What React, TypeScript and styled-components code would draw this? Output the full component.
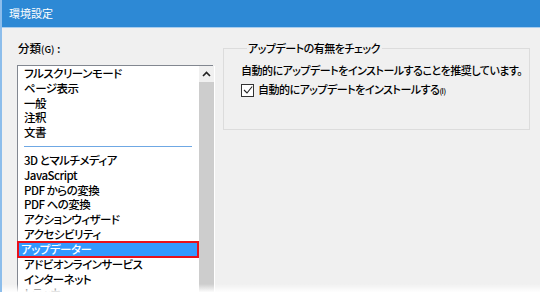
import { createGlobalStyle } from 'styled-components';
import styled from 'styled-components';

const GlobalStyle = createGlobalStyle`
    html, body {
        margin: 0;
        padding: 0;
        width: 540px;
        height: 292px;
        overflow: hidden;
        background: #ffffff;
    }
    body {
        font-family: "Noto Sans CJK JP", "Noto Sans", sans-serif;
        font-feature-settings: "palt";
        color: #000000;
    }
`;

interface Item {
    label: string;
    selected?: boolean;
}

const topItems: Item[] = [
    { label: 'フルスクリーンモード' },
    { label: 'ページ表示' },
    { label: '一般' },
    { label: '注釈' },
    { label: '文書' },
];

const bottomItems: Item[] = [
    { label: '3D とマルチメディア' },
    { label: 'JavaScript' },
    { label: 'PDF からの変換' },
    { label: 'PDF への変換' },
    { label: 'アクションウィザード' },
    { label: 'アクセシビリティ' },
    { label: 'アップデーター', selected: true },
    { label: 'アドビオンラインサービス' },
    { label: 'インターネット' },
    { label: 'トラッカー' },
];

const App = () => {
    return (
        <>
            <GlobalStyle />
            <Window>
                <TitleBar>環境設定</TitleBar>
                <Body>
                    <LeftPane>
                        <Label>
                            分類<Accel>(G)</Accel> :
                        </Label>
                        <ListBox>
                            <Items>
                                {topItems.map((item) => (
                                    <Row key={item.label}>{item.label}</Row>
                                ))}
                                <Separator />
                                {bottomItems.map((item) => (
                                    <Row key={item.label} $selected={item.selected}>
                                        {item.label}
                                    </Row>
                                ))}
                            </Items>
                            <ScrollBar>
                                <ScrollButton>
                                    <svg width="9" height="6" viewBox="0 0 9 6">
                                        <path d="M1 5 L4.5 1.5 L8 5" fill="none" stroke="#222" strokeWidth="1.6" />
                                    </svg>
                                </ScrollButton>
                                <ScrollTrack />
                            </ScrollBar>
                        </ListBox>
                    </LeftPane>
                    <RightPane>
                        <GroupBox>
                            <Legend>アップデートの有無をチェック</Legend>
                            <Note>自動的にアップデートをインストールすることを推奨しています。</Note>
                            <CheckRow>
                                <CheckBox>
                                    <svg width="10" height="10" viewBox="0 0 10 10">
                                        <path d="M1 5 L4 8 L9.2 1.5" fill="none" stroke="#222" strokeWidth="1.1" />
                                    </svg>
                                </CheckBox>
                                <span>
                                    自動的にアップデートをインストールする<Small>(I)</Small>
                                </span>
                            </CheckRow>
                        </GroupBox>
                    </RightPane>
                </Body>
                <Fade />
            </Window>
        </>
    );
};

const Window = styled.div`
    position: relative;
    width: 540px;
    height: 292px;
    box-sizing: border-box;
    border-left: 2px solid #8cbdeb;
    background: #f0f0f0;
    display: flex;
    flex-direction: column;
    overflow: hidden;
    font-size: 11px;
    letter-spacing: -0.5px;
    font-weight: 500;
`;

const TitleBar = styled.div`
    height: 27px;
    flex: none;
    background: #2d89d5;
    color: #ffffff;
    font-size: 11px;
    font-weight: 400;
    letter-spacing: 0;
    line-height: 27px;
    padding-left: 7px;
    border-bottom: 1px solid #a9cdee;
`;

const Body = styled.div`
    flex: 1;
    display: flex;
    align-items: flex-start;
    padding-left: 15px;
    min-height: 0;
`;

const LeftPane = styled.div`
    width: 196px;
    flex: none;
    display: flex;
    flex-direction: column;
    padding-top: 12px;
    height: 100%;
    box-sizing: border-box;
`;

const Label = styled.div`
    font-size: 11.5px;
    letter-spacing: 0;
    line-height: 16px;
    margin-left: 1px;
    margin-bottom: 8px;
`;

const Accel = styled.span`
    font-size: 9.5px;
`;

const ListBox = styled.div`
    flex: 1;
    display: flex;
    border: 1px solid #828790;
    border-bottom: none;
    background: #ffffff;
    margin-bottom: -20px;
`;

const Items = styled.div`
    flex: 1;
    padding: 0 2px 0 2px;
    display: flex;
    flex-direction: column;
`;

const Row = styled.div<{ $selected?: boolean }>`
    font-size: 11.5px;
    line-height: 14.8px;
    height: 14.8px;
    padding-left: ${(p) => (p.$selected ? '2px' : '4px')};
    white-space: nowrap;
    color: ${(p) => (p.$selected ? '#ffffff' : '#000000')};
    background: ${(p) => (p.$selected ? '#3399ff' : 'transparent')};
    outline: ${(p) => (p.$selected ? '2px solid #e8101a' : 'none')};
    margin: ${(p) => (p.$selected ? '1px 0 1px -1px' : '0')};
    ${(p) => (p.$selected ? 'height: 13px; line-height: 13px; width: 176px;' : '')}
`;

const Separator = styled.div`
    height: 13px;
    margin: 0 0 0 4px;
    width: 168px;
    display: flex;
    align-items: center;
    &::after {
        content: '';
        flex: 1;
        height: 1px;
        background: #6fa8e4;
    }
`;

const ScrollBar = styled.div`
    width: 15px;
    flex: none;
    display: flex;
    flex-direction: column;
    border-right: 1px solid #ffffff;
`;

const ScrollButton = styled.div`
    height: 16px;
    background: #f0f0f0;
    display: flex;
    align-items: center;
    justify-content: center;
`;

const ScrollTrack = styled.div`
    flex: 1;
    background: #cdcdcd;
`;

const RightPane = styled.div`
    flex: none;
    padding: 12px 0 0 10px;
`;

const GroupBox = styled.fieldset`
    margin: 0;
    width: 307px;
    box-sizing: border-box;
    border: 1px solid #dcdcdc;
    padding: 6px 0 30px 17px;
    font-size: 11px;
`;

const Legend = styled.legend`
    padding: 0 2px 0 1px;
    margin-left: 6px;
    line-height: 16px;
`;

const Note = styled.div`
    line-height: 16px;
    white-space: nowrap;
`;

const CheckRow = styled.div`
    display: flex;
    align-items: center;
    gap: 4px;
    margin-top: 3px;
    line-height: 16px;
    white-space: nowrap;
`;

const CheckBox = styled.span`
    width: 11px;
    height: 11px;
    border: 1px solid #333333;
    background: #ffffff;
    display: flex;
    align-items: center;
    justify-content: center;
`;

const Small = styled.span`
    font-size: 7.5px;
`;

const Fade = styled.div`
    position: absolute;
    left: 0;
    right: 0;
    bottom: 0;
    height: 8px;
    background: linear-gradient(to bottom, rgba(255, 255, 255, 0), rgba(255, 255, 255, 0.95));
    pointer-events: none;
`;

export default App;
